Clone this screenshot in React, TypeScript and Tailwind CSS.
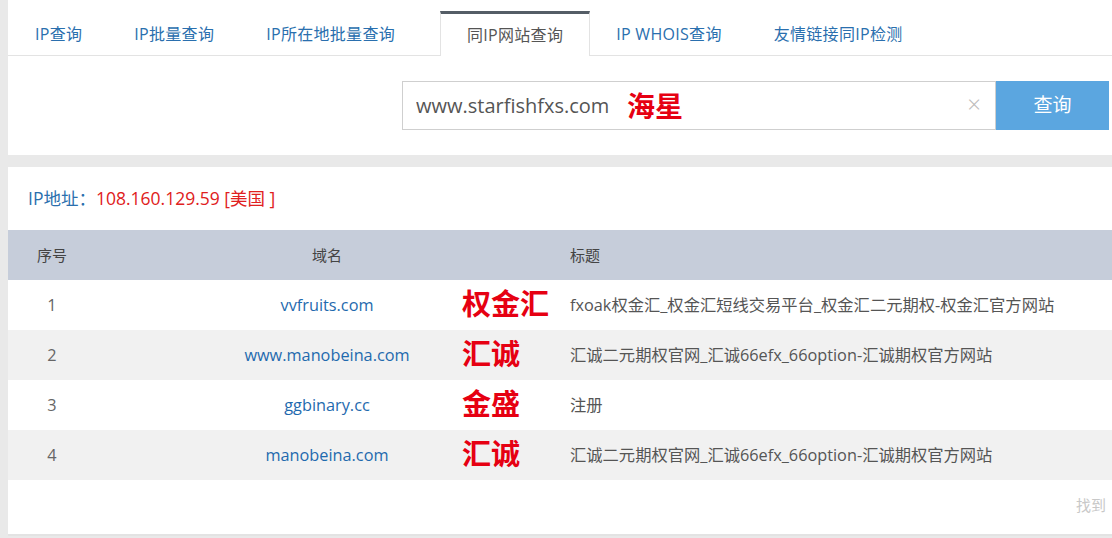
import { useState } from 'react'

const tabs = ['IP查询', 'IP批量查询', 'IP所在地批量查询', '同IP网站查询', 'IP WHOIS查询', '友情链接同IP检测']

const rows = [
  { no: 1, domain: 'vvfruits.com', mark: '权金汇', title: 'fxoak权金汇_权金汇短线交易平台_权金汇二元期权-权金汇官方网站' },
  { no: 2, domain: 'www.manobeina.com', mark: '汇诚', title: '汇诚二元期权官网_汇诚66efx_66option-汇诚期权官方网站' },
  { no: 3, domain: 'ggbinary.cc', mark: '金盛', title: '注册' },
  { no: 4, domain: 'manobeina.com', mark: '汇诚', title: '汇诚二元期权官网_汇诚66efx_66option-汇诚期权官方网站' },
]

export default function App() {
  const [active] = useState(3)
  const [query, setQuery] = useState('www.starfishfxs.com')

  return (
    <div
      className="w-[1112px] h-[538px] overflow-hidden bg-[#e9e9e9] pl-[8px]"
      style={{ fontFamily: '"Open Sans", "Noto Sans CJK SC", sans-serif' }}
    >
      {/* top panel */}
      <div className="bg-white h-[155px]">
        <div className="h-[56px] flex items-end border-b border-[#e3e3e3] pl-px">
          {tabs.map((t, i) => (
            <div
              key={t}
              className={`h-[45px] px-[26px] flex items-center text-[16px] tracking-[0.3px] -mb-px ${
                i === active
                  ? 'border-t-[3px] border-t-[#545d66] border-x border-x-[#e3e3e3] bg-white text-[#555]'
                  : 'text-[#2a6fae]'
              } ${i === 2 ? 'mr-[19px]' : ''}`}
            >
              {t}
            </div>
          ))}
        </div>
        <div className="flex justify-end pr-[3px] mt-[25px]">
          <div className="relative w-[594px] h-[49px] border border-[#cfcfcf] flex items-center">
            <input
              value={query}
              onChange={(e) => setQuery(e.target.value)}
              className="h-full w-[220px] pl-[13px] text-[20px] text-[#555] outline-none bg-transparent"
            />
            <span className="text-[#e60012] font-bold text-[28px] leading-none ml-[4px]">海星</span>
            <span className="absolute right-[14px] top-[10px] text-[#bbb] text-[24px] leading-none font-light">×</span>
          </div>
          <button className="w-[113px] h-[49px] bg-[#5ba6e0] text-white text-[19px]">查询</button>
        </div>
      </div>

      {/* result panel */}
      <div className="bg-white mt-[12px] h-[369px] border-b-2 border-[#e3e3e3] relative">
        <div className="h-[63px] flex items-center pl-[20px] text-[17.5px]">
          <span className="text-[#2a6fae]">IP地址：</span>
          <span className="text-[#e02020]">108.160.129.59 [美国 ]</span>
        </div>
        <div className="h-[50px] bg-[#c6cdda] flex items-center text-[15px] text-[#444]">
          <div className="w-[88px] text-center">序号</div>
          <div className="w-[462px] text-center">域名</div>
          <div className="pl-[12px]">标题</div>
        </div>
        {rows.map((r, i) => (
          <div
            key={r.no}
            className={`relative h-[50px] flex items-center text-[16.3px] ${i % 2 === 1 ? 'bg-[#f1f1f1]' : 'bg-white'}`}
          >
            <div className="w-[88px] text-center text-[#666]">{r.no}</div>
            <div className="w-[462px] text-center text-[#1f6aae]">{r.domain}</div>
            <div className="pl-[12px] text-[#555]">{r.title}</div>
            <span className="absolute left-[454px] top-[9px] text-[#e60012] font-bold text-[29px] leading-none">
              {r.mark}
            </span>
          </div>
        ))}
        <div className="absolute right-[6px] bottom-[18px] text-[15px] text-[#c8c8c8]">找到</div>
      </div>
    </div>
  )
}
